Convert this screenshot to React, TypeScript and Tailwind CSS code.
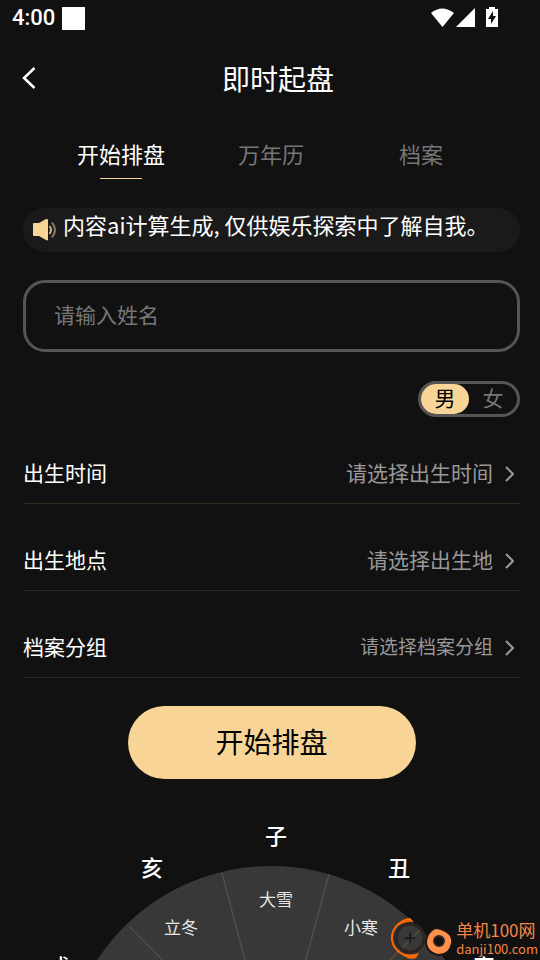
import React, { useState } from 'react';

const tabs = ['开始排盘', '万年历', '档案'];

const fields = [
  { label: '出生时间', hint: '请选择出生时间', size: 'text-[21px]' },
  { label: '出生地点', hint: '请选择出生地', size: 'text-[21px]' },
  { label: '档案分组', hint: '请选择档案分组', size: 'text-[19px]' },
];

const branches = [
  { name: '戌', x: 59, y: 174 },
  { name: '亥', x: 152, y: 75 },
  { name: '子', x: 276, y: 43 },
  { name: '丑', x: 399, y: 75 },
  { name: '寅', x: 484, y: 174 },
];

const terms = [
  { name: '立冬', x: 181, y: 134 },
  { name: '大雪', x: 276, y: 106 },
  { name: '小寒', x: 361, y: 134 },
];

function StatusBar() {
  return (
    <div className="flex h-9 items-center pl-3 pr-[41px]">
      <span className="font-[Roboto] text-[22px] font-medium leading-9">4:00</span>
      <span className="ml-[7px] h-[23px] w-[23px] bg-white" />
      <svg className="ml-auto" width="68" height="22" viewBox="0 0 68 22" fill="#fff">
        <path d="M0 6 Q11 -3 23 6 L11.500 20 Z" />
        <path d="M25 20 L44 1 V20 Z" />
        <path d="M55 2 H58 V0 H64 V2 H67 V20 H55 Z" />
        <path d="M62 4 L57 12 H60 V17 L65 9 H62 Z" fill="#111" />
      </svg>
    </div>
  );
}

function Speaker() {
  return (
    <svg width="24" height="22" viewBox="0 0 24 22" fill="none">
      <path d="M1 4 H6 L13 0 Q15 -0.500 15 1.500 V20.500 Q15 22 13 21 L6 17 H1 Q0 17 0 16 V5 Q0 4 1 4 Z" fill="#f8d496" />
      <path d="M16.500 7 Q19.500 11 16.500 15" stroke="#cfb27e" strokeWidth="2" />
      <path d="M19 3.500 Q25 11 19 18.500" stroke="#8f7b58" strokeWidth="2" />
    </svg>
  );
}

function Dial() {
  return (
    <svg className="mx-auto block shrink-0" width="540" height="368" viewBox="0 0 540 368">
      <circle cx="271" cy="281" r="208" fill="#383838" />
      <g fill="none" stroke="#554c45" strokeWidth="1.500">
        <path d="M222 80 L275 281 L329 81" />
        <path d="M129 133 L275 281 L422 135" />
      </g>
      <g fill="#fff" textAnchor="middle">
        {branches.map((b) => (
          <text key={b.name} x={b.x} y={b.y + 8} fontSize="22" fontWeight="500">{b.name}</text>
        ))}
        {terms.map((t) => (
          <text key={t.name} x={t.x} y={t.y + 7} fontSize="17" fill="#e8e8e8">{t.name}</text>
        ))}
      </g>
    </svg>
  );
}

function SiteBadge() {
  return (
    <div className="absolute bottom-0 right-0 flex items-end pr-0.5 text-[#f58646]">
      <svg width="66" height="46" viewBox="0 0 66 46" fill="none">
        <circle cx="20" cy="24" r="14" stroke="#2b2423" strokeWidth="3" />
        <path d="M15 24 H25 M20 19 V29" stroke="#211c1c" strokeWidth="2" />
        <path d="M20 5 C-4 9 -5 39 22 43" stroke="#ff6900" strokeWidth="2" />
        <path d="M8 12 Q13 4 20 4 L24 8 Q15 7 8 12 Z M11 39 Q20 42 29 39 L26 44 Q18 47 11 39 Z" fill="#ff6900" />
        <path d="M45 14 Q51 14 57 18 Q63 22 62 29 Q60 41 49 41 Q36 39 36 27 Q37 18 45 14 Z" fill="#ff914d" stroke="#1d1514" strokeWidth="2" />
        <circle cx="49" cy="27" r="5" fill="#111" stroke="#38201a" strokeWidth="2" />
      </svg>
      <div className="whitespace-nowrap">
        <div className="text-[17px] leading-[20px]">单机100网</div>
        <div className="pb-0.5 text-[13px] leading-[18px]">danji100.com</div>
      </div>
    </div>
  );
}

export default function App() {
  const [tab, setTab] = useState(0);
  const [gender, setGender] = useState('男');

  return (
    <div className="relative flex h-screen flex-col overflow-hidden bg-[#111] font-['Noto_Sans_CJK_SC',sans-serif] text-white">
      <StatusBar />

      <header className="relative flex h-[84px] shrink-0 items-center justify-center pl-4">
        <button aria-label="返回" className="absolute left-5 p-0.5">
          <svg width="14" height="22" viewBox="0 0 14 22" fill="none" stroke="#fff" strokeWidth="2.500">
            <path d="M12.500 1 L2 11 L12.500 21" />
          </svg>
        </button>
        <h1 className="text-[28px] leading-10">即时起盘</h1>
      </header>

      <nav className="flex h-[60px] shrink-0 justify-center pl-[46px] pr-11">
        {tabs.map((name, i) => (
          <button
            key={name}
            onClick={() => setTab(i)}
            className={`flex flex-1 flex-col items-center pt-4 text-[22px] leading-[34px] ${i === tab ? 'text-white' : 'text-[#777]'}`}
          >
            {name}
            {i === tab && <span className="mt-2 h-px w-[42px] bg-[#f8d496]" />}
          </button>
        ))}
      </nav>

      <main className="ml-[23px] mr-5 mt-7 shrink-0">
        <div className="flex h-11 items-center rounded-full bg-[#1a1a1a] pl-2.5">
          <Speaker />
          <p className="mb-3 ml-1.5 whitespace-nowrap text-[22px] leading-8">内容ai计算生成, 仅供娱乐探索中了解自我。</p>
        </div>

        <input
          aria-label="姓名"
          placeholder="请输入姓名"
          className="mt-7 block h-[72px] w-full rounded-[22px] border-3 border-[#555] bg-transparent px-7 pb-1 text-[21px] outline-none placeholder:text-[#777]"
        />

        <div className="mt-[29px] flex justify-end">
          <div className="flex h-9 w-[102px] rounded-full border-3 border-[#555] text-[21px]">
            {['男', '女'].map((g) => (
              <button
                key={g}
                onClick={() => setGender(g)}
                className={`flex-1 rounded-full pb-1 leading-[26px] ${g === gender ? 'bg-[#f8d496] text-black' : 'text-[#777]'}`}
              >
                {g}
              </button>
            ))}
          </div>
        </div>

        <div className="mt-[27px]">
          {fields.map((f) => (
            <button key={f.label} className="flex h-[87px] w-full items-center border-b border-[#30281b] pt-[27px] pr-1.5 first:h-[60px] first:pt-0">
              <span className="pb-0.5 text-[21px]">{f.label}</span>
              <span className={`ml-auto pb-0.5 text-[#999] ${f.size}`}>{f.hint}</span>
              <svg className="ml-3" width="9" height="16" viewBox="0 0 9 16" fill="none" stroke="#999" strokeWidth="2">
                <path d="M1 1 L8 8 L1 15" />
              </svg>
            </button>
          ))}
        </div>

        <div className="mt-7 flex justify-center">
          <button className="h-[73px] w-72 rounded-full bg-[#f8d496] pb-1 text-[28px] text-black">开始排盘</button>
        </div>
      </main>

      <div className="mt-3.5 min-h-0 flex-1 overflow-hidden">
        <Dial />
      </div>
      <SiteBadge />
    </div>
  );
}
